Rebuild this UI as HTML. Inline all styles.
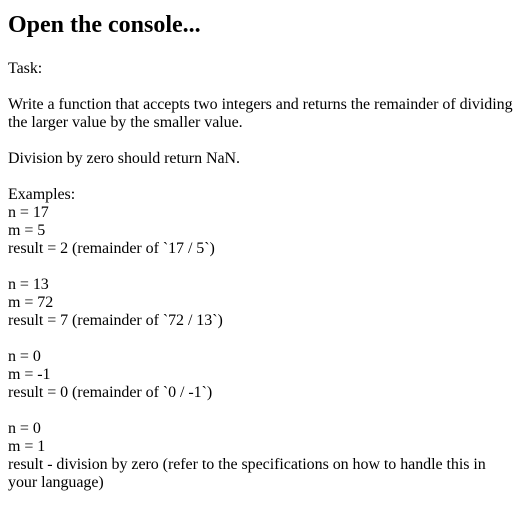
<!DOCTYPE html>
<html><head><meta charset="utf-8"><style>
html,body{margin:0;padding:0;background:#fff;}
body{padding:0 8px;font-family:"Liberation Serif",serif;color:#000;}
h2{margin:0;padding-top:11px;font-size:24px;line-height:28px;font-weight:bold;}
.t{margin-top:21px;font-size:16px;line-height:18px;white-space:nowrap;letter-spacing:-0.05px;}
</style></head><body>
<h2>Open the console...</h2>
<div class="t">Task:<br><br>Write a function that accepts two integers and returns the remainder of dividing<br>the larger value by the smaller value.<br><br>Division by zero should return NaN.<br><br>Examples:<br>n = 17<br>m = 5<br>result = 2 (remainder of `17 / 5`)<br><br>n = 13<br>m = 72<br>result = 7 (remainder of `72 / 13`)<br><br>n = 0<br>m = -1<br>result = 0 (remainder of `0 / -1`)<br><br>n = 0<br>m = 1<br>result - division by zero (refer to the specifications on how to handle this in<br>your language)</div>
</body></html>
